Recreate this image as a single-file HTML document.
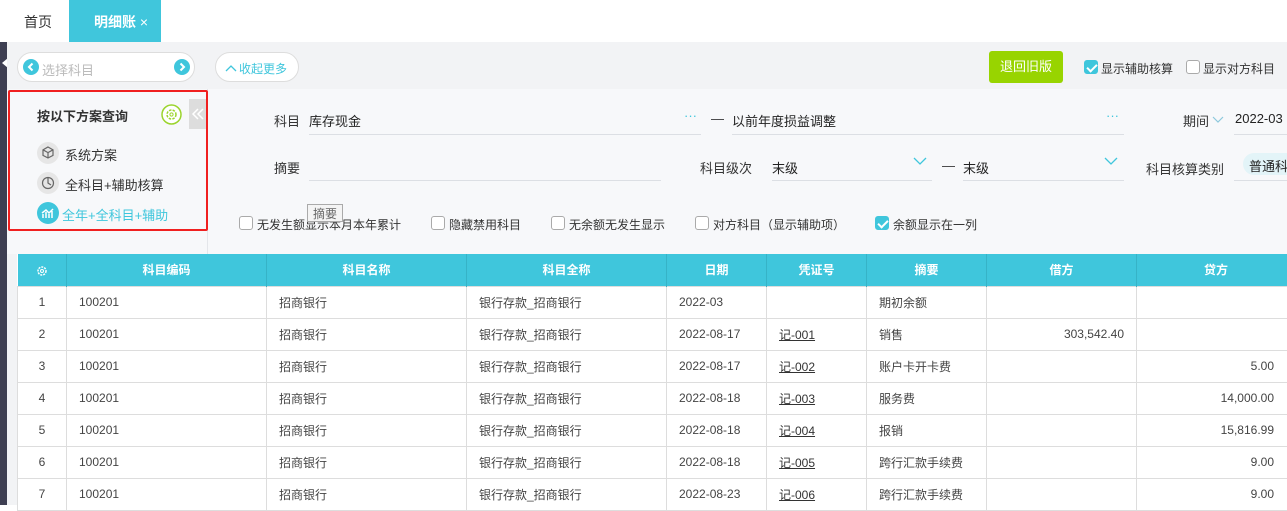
<!DOCTYPE html>
<html><head><meta charset="utf-8"><style>
*{box-sizing:border-box;margin:0;padding:0}
body{width:1287px;height:505px;overflow:hidden;background:#fff;font-family:"Liberation Sans","Noto Sans CJK SC",sans-serif;font-size:13px;color:#333;position:relative}
.a{position:absolute;white-space:nowrap}
.cb{position:absolute;width:14px;height:14px;border:1px solid #aaa;border-radius:3px;background:#fff}
.cb.on{background:#3fc6dc;border-color:#3fc6dc}
.cb.on:after{content:"";position:absolute;left:4px;top:1px;width:4px;height:8px;border:solid #fff;border-width:0 2px 2px 0;transform:rotate(45deg)}
.ul{position:absolute;height:1px;background:#dcdfe4}
table{position:absolute;left:17px;top:254px;border-collapse:collapse;table-layout:fixed;width:1290px}
th{background:#3fc6dc;color:#fff;font-weight:bold;height:32px;font-size:12px;border-right:1px solid #36b3c7}
td{height:32px;border:1px solid #ddd;padding:0 12px;font-size:12px;color:#444;white-space:nowrap;background:#fff}
td.c{text-align:center;padding:0}
td.r{text-align:right}
u{color:#333}
svg{position:absolute}
</style></head><body>
<div class="a" style="left:0;top:42px;width:7px;height:463px;background:#3e3f52"></div>
<div class="a" style="left:2px;top:58px;width:0;height:0;border:5px solid transparent;border-right:6px solid #fff;border-left:0"></div>
<div class="a" style="left:24px;top:12px;font-size:14px">首页</div>
<div class="a" style="left:69px;top:0;width:92px;height:42px;background:#40c6dc;color:#fff;font-size:14px;font-weight:bold;padding:12px 0 0 25px">明细账 <span style="font-weight:normal">×</span></div>
<div class="a" style="left:7px;top:42px;width:1280px;height:47px;background:#f2f3f5"></div>
<div class="a" style="left:17px;top:52px;width:178px;height:30px;border:1px solid #ddd;border-radius:15px;background:#fff"></div>
<svg style="left:23px;top:59px" width="16" height="16"><circle cx="8" cy="8" r="8" fill="#3fc6dc"/><path d="M9.5 4.5L6 8l3.5 3.5" stroke="#fff" stroke-width="2" fill="none"/></svg>
<svg style="left:174px;top:59px" width="16" height="16"><circle cx="8" cy="8" r="8" fill="#3fc6dc"/><path d="M6.5 4.5L10 8l-3.5 3.5" stroke="#fff" stroke-width="2" fill="none"/></svg>
<div class="a" style="left:42px;top:60px;color:#bbb">选择科目</div>
<div class="a" style="left:215px;top:52px;width:84px;height:30px;border:1px solid #ddd;border-radius:15px;background:#fff"></div>
<svg style="left:225px;top:64px" width="12" height="8"><path d="M1 7l5-5 5 5" stroke="#3fc6dc" stroke-width="1.3" fill="none"/></svg>
<div class="a" style="left:239px;top:60px;color:#3fc6dc;font-size:12px">收起更多</div>
<div class="a" style="left:989px;top:51px;width:74px;height:32px;background:#98d400;border-radius:3px;color:#fff;font-size:13px;text-align:center;line-height:32px">退回旧版</div>
<div class="cb on" style="left:1084px;top:60px"></div><div class="a" style="left:1101px;top:60px;font-size:12px">显示辅助核算</div>
<div class="cb" style="left:1186px;top:60px"></div><div class="a" style="left:1203px;top:60px;font-size:12px">显示对方科目</div>
<div class="a" style="left:7px;top:89px;width:1280px;height:165px;background:#f7f8fa"></div>
<div class="a" style="left:207px;top:89px;width:1px;height:165px;background:#e4e6ea"></div>
<div class="a" style="left:189px;top:99px;width:18px;height:30px;background:#ddd"></div>
<svg style="left:191px;top:108px" width="14" height="12"><path d="M7 1L2 6l5 5M12 1L7 6l5 5" stroke="#fff" stroke-width="1.5" fill="none"/></svg>
<div class="a" style="left:8px;top:90px;width:200px;height:141px;border:2px solid #f02020;border-radius:2px"></div>
<div class="a" style="left:37px;top:106px;font-weight:bold;font-size:13px">按以下方案查询</div>
<svg style="left:161px;top:104px" width="21" height="21"><circle cx="10.5" cy="10.5" r="9.5" stroke="#9bd42d" stroke-width="1.5" fill="#fff"/><circle cx="10.5" cy="10.5" r="4.5" stroke="#9bd42d" stroke-width="1.5" fill="none" stroke-dasharray="2.5 1.2"/><circle cx="10.5" cy="10.5" r="1.6" stroke="#9bd42d" fill="none"/></svg>
<svg style="left:37px;top:142px" width="22" height="22"><circle cx="11" cy="11" r="11" fill="#e6e6e6"/><path d="M11 5l5 2.8v5.6L11 16l-5-2.6V7.8zM6 7.8l5 2.8 5-2.8M11 10.6V16" stroke="#666" stroke-width="1.2" fill="none"/></svg>
<div class="a" style="left:65px;top:145px">系统方案</div>
<svg style="left:37px;top:172px" width="22" height="22"><circle cx="11" cy="11" r="11" fill="#e6e6e6"/><circle cx="11" cy="11" r="5.5" stroke="#666" stroke-width="1.2" fill="none"/><path d="M11 5.5V11l3 2" stroke="#666" stroke-width="1.2" fill="none"/></svg>
<div class="a" style="left:65px;top:175px">全科目+辅助核算</div>
<svg style="left:37px;top:202px" width="22" height="22"><circle cx="11" cy="11" r="11" fill="#3fc6dc"/><path d="M6 16v-4M9 16v-6M12 16v-4M15 16v-7M5 11l4-3 3 3 4-4" stroke="#fff" stroke-width="1.5" fill="none"/></svg>
<div class="a" style="left:62px;top:205px;color:#3fc6dc">全年+全科目+辅助</div>
<div class="a" style="left:274px;top:111px">科目</div>
<div class="a" style="left:309px;top:111px;color:#222">库存现金</div>
<div class="a" style="left:684px;top:108px;color:#3fc6dc">···</div>
<div class="ul" style="left:309px;top:134px;width:392px"></div>
<div class="a" style="left:711px;top:111px">—</div>
<div class="a" style="left:732px;top:111px;color:#222">以前年度损益调整</div>
<div class="a" style="left:1106px;top:108px;color:#3fc6dc">···</div>
<div class="ul" style="left:732px;top:134px;width:392px"></div>
<div class="a" style="left:1183px;top:111px">期间</div>
<svg style="left:1212px;top:116px" width="12" height="8"><path d="M1 1l5 5 5-5" stroke="#8cc8dc" stroke-width="1.2" fill="none"/></svg>
<div class="a" style="left:1235px;top:111px;color:#222">2022-03</div>
<div class="ul" style="left:1234px;top:134px;width:53px"></div>
<div class="a" style="left:274px;top:158px">摘要</div>
<div class="ul" style="left:309px;top:180px;width:352px"></div>
<div class="a" style="left:700px;top:158px">科目级次</div>
<div class="a" style="left:772px;top:158px;color:#222">末级</div>
<svg style="left:913px;top:157px" width="14" height="9"><path d="M1 1l6 6 6-6" stroke="#3fc6dc" stroke-width="1.3" fill="none"/></svg>
<div class="ul" style="left:772px;top:180px;width:160px"></div>
<div class="a" style="left:942px;top:158px">—</div>
<div class="a" style="left:963px;top:158px;color:#222">末级</div>
<svg style="left:1104px;top:157px" width="14" height="9"><path d="M1 1l6 6 6-6" stroke="#3fc6dc" stroke-width="1.3" fill="none"/></svg>
<div class="ul" style="left:963px;top:180px;width:161px"></div>
<div class="a" style="left:1146px;top:159px">科目核算类别</div>
<div class="a" style="left:1243px;top:153px;width:60px;height:22px;background:#e3f4f8;border-radius:11px;padding:3px 0 0 6px;color:#222">普通科目</div>
<div class="ul" style="left:1234px;top:180px;width:53px"></div>
<div class="cb" style="left:239px;top:216px"></div><div class="a" style="left:257px;top:216px;font-size:12px">无发生额显示本月本年累计</div>
<div class="a" style="left:307px;top:204px;width:36px;height:18px;border:1px solid #aaa;background:#f4f4f4;color:#666;font-size:12px;padding-left:5px">摘要</div>
<div class="cb" style="left:431px;top:216px"></div><div class="a" style="left:449px;top:216px;font-size:12px">隐藏禁用科目</div>
<div class="cb" style="left:551px;top:216px"></div><div class="a" style="left:569px;top:216px;font-size:12px">无余额无发生显示</div>
<div class="cb" style="left:695px;top:216px"></div><div class="a" style="left:713px;top:216px;font-size:12px">对方科目（显示辅助项）</div>
<div class="cb on" style="left:875px;top:216px"></div><div class="a" style="left:893px;top:216px;font-size:12px">余额显示在一列</div>
<div class="a" style="left:7px;top:254px;width:10px;height:251px;background:#f2f3f5"></div>
<table>
<colgroup><col style="width:49px"><col style="width:200px"><col style="width:200px"><col style="width:200px"><col style="width:100px"><col style="width:100px"><col style="width:120px"><col style="width:150px"><col style="width:171px"></colgroup>
<tr><th><svg style="position:static;vertical-align:middle" width="12" height="12"><circle cx="6" cy="6" r="4" stroke="#fff" stroke-width="1.5" fill="none" stroke-dasharray="2 1"/><circle cx="6" cy="6" r="1.5" stroke="#fff" fill="none"/></svg></th><th>科目编码</th><th>科目名称</th><th>科目全称</th><th>日期</th><th>凭证号</th><th>摘要</th><th>借方</th><th style="text-align:left;padding-left:67px">贷方</th></tr>
<tr><td class="c">1</td><td>100201</td><td>招商银行</td><td>银行存款_招商银行</td><td>2022-03</td><td></td><td>期初余额</td><td></td><td></td></tr>
<tr><td class="c">2</td><td>100201</td><td>招商银行</td><td>银行存款_招商银行</td><td>2022-08-17</td><td><u>记-001</u></td><td>销售</td><td class="r">303,542.40</td><td></td></tr>
<tr><td class="c">3</td><td>100201</td><td>招商银行</td><td>银行存款_招商银行</td><td>2022-08-17</td><td><u>记-002</u></td><td>账户卡开卡费</td><td></td><td class="r" style="padding-right:33px">5.00</td></tr>
<tr><td class="c">4</td><td>100201</td><td>招商银行</td><td>银行存款_招商银行</td><td>2022-08-18</td><td><u>记-003</u></td><td>服务费</td><td></td><td class="r" style="padding-right:33px">14,000.00</td></tr>
<tr><td class="c">5</td><td>100201</td><td>招商银行</td><td>银行存款_招商银行</td><td>2022-08-18</td><td><u>记-004</u></td><td>报销</td><td></td><td class="r" style="padding-right:33px">15,816.99</td></tr>
<tr><td class="c">6</td><td>100201</td><td>招商银行</td><td>银行存款_招商银行</td><td>2022-08-18</td><td><u>记-005</u></td><td>跨行汇款手续费</td><td></td><td class="r" style="padding-right:33px">9.00</td></tr>
<tr><td class="c">7</td><td>100201</td><td>招商银行</td><td>银行存款_招商银行</td><td>2022-08-23</td><td><u>记-006</u></td><td>跨行汇款手续费</td><td></td><td class="r" style="padding-right:33px">9.00</td></tr>
</table>
</body></html>
